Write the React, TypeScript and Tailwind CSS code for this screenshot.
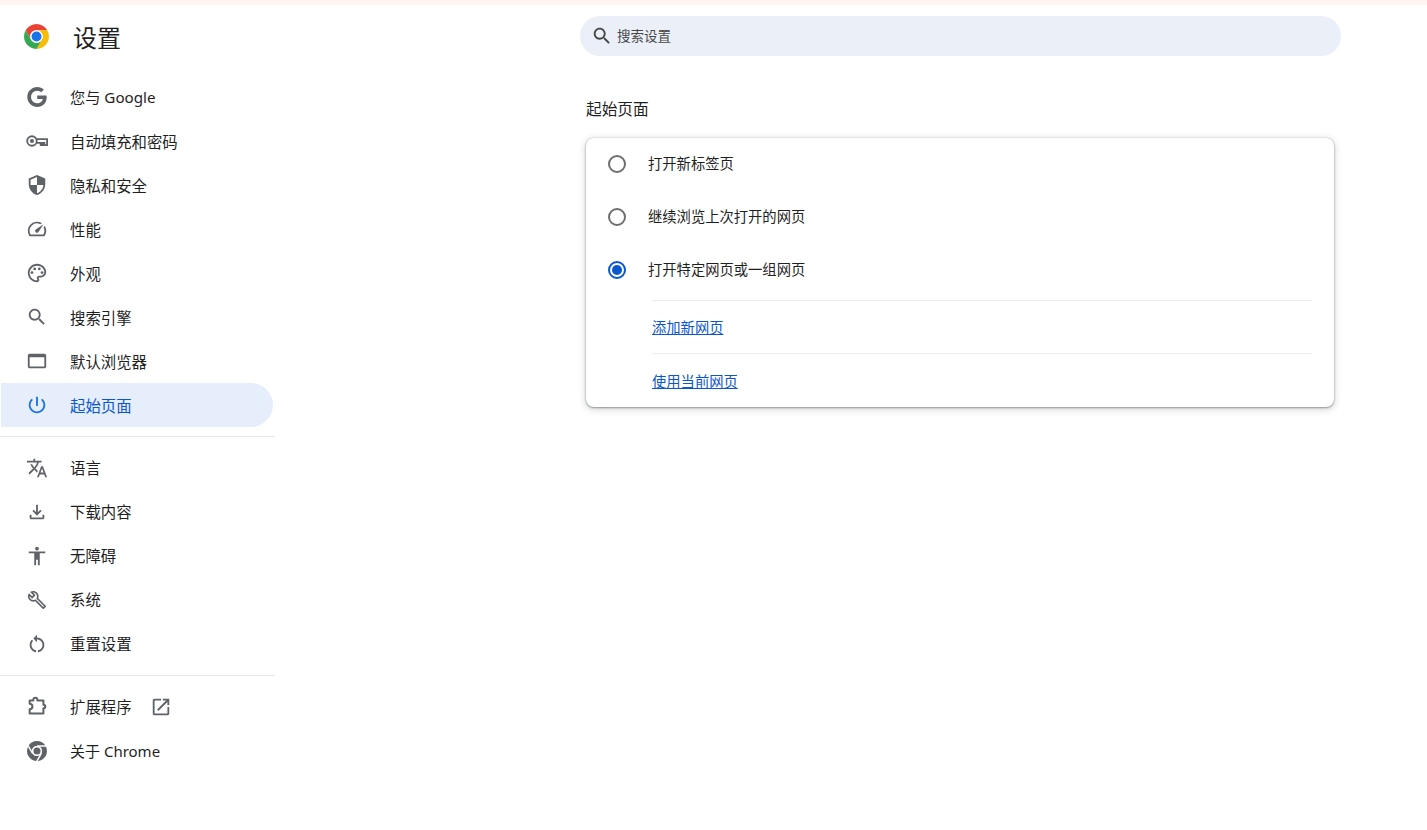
import type { ReactNode } from "react";

const FONT = "font-['Noto_Sans','Noto_Sans_CJK_SC',sans-serif]";

function Icon({ d, className = "", children }: { d?: string; className?: string; children?: ReactNode }) {
  return (
    <svg viewBox="0 0 24 24" fill="currentColor" className={`h-[22px] w-[22px] shrink-0 ${className}`}>
      {d && <path d={d} />}
      {children}
    </svg>
  );
}

const searchPath =
  "M15.5 14h-.79l-.28-.27C15.41 12.59 16 11.11 16 9.5 16 5.91 13.09 3 9.5 3S3 5.91 3 9.5 5.91 16 9.5 16c1.61 0 3.09-.59 4.23-1.57l.27.28v.79l5 4.99L20.49 19l-4.99-5zm-6 0C7.01 14 5 11.99 5 9.5S7.01 5 9.5 5 14 7.01 14 9.5 11.99 14 9.5 14z";

const googleIcon = (
  <Icon className="scale-90">
    <path d="M12.24 10.285V14.4h6.806c-.275 1.765-2.056 5.174-6.806 5.174-4.095 0-7.439-3.389-7.439-7.574s3.345-7.574 7.439-7.574c2.33 0 3.891.989 4.785 1.849l3.254-3.138C18.189 1.186 15.479 0 12.24 0c-6.635 0-12 5.365-12 12s5.365 12 12 12c6.926 0 11.52-4.869 11.52-11.726 0-.788-.085-1.39-.189-1.989H12.24z" />
  </Icon>
);

const keyIcon = (
  <Icon>
    <circle cx="6.5" cy="12" r="5.2" fill="none" stroke="currentColor" strokeWidth="2" />
    <circle cx="6.5" cy="12" r="2.2" />
    <path d="M11.5 10H23V16.5H20V14H18V16.5H16V14H11.5" fill="none" stroke="currentColor" strokeWidth="2" />
  </Icon>
);

const extensionIcon = (
  <Icon>
    <path
      d="M4 5H8V4a2.2 2.2 0 0 1 4.4 0V5H19V9.5a2 2 0 0 1 0 4V19H4V14.5a3 3 0 0 0 0-6Z"
      fill="none"
      stroke="currentColor"
      strokeWidth="2.2"
      strokeLinejoin="round"
    />
  </Icon>
);

const paletteIcon = (
  <Icon d="M12 22C6.49 22 2 17.51 2 12S6.49 2 12 2s10 4.04 10 9c0 3.31-2.69 6-6 6h-1.77c-.28 0-.5.22-.5.5 0 .12.05.23.13.33.41.47.64 1.06.64 1.67 0 1.38-1.12 2.5-2.5 2.5zm0-18c-4.41 0-8 3.59-8 8s3.59 8 8 8c.28 0 .5-.22.5-.5a.54.54 0 0 0-.14-.35c-.41-.46-.63-1.05-.63-1.65 0-1.38 1.12-2.5 2.5-2.5H16c2.21 0 4-1.79 4-4 0-3.86-3.59-7-8-7z">
    <circle cx="6.5" cy="11.5" r="1.5" />
    <circle cx="9.5" cy="7.5" r="1.5" />
    <circle cx="14.5" cy="7.5" r="1.5" />
    <circle cx="17.5" cy="11.5" r="1.5" />
  </Icon>
);

function ChromeLogo({ mono }: { mono?: boolean }) {
  return (
    <svg viewBox="0 0 48 48" className={mono ? "h-[20px] w-[20px] shrink-0" : "h-[25px] w-[25px] shrink-0"}>
      <path fill={mono ? "#5f6368" : "#ea4335"} d="M3.22 12A24 24 0 0 1 44.78 12L24 12A12 12 0 0 0 13.6 30Z" />
      <path fill={mono ? "#5f6368" : "#fbbc04"} d="M44.78 12A24 24 0 0 1 24 48L34.39 30A12 12 0 0 0 24 12Z" />
      <path fill={mono ? "#5f6368" : "#34a853"} d="M24 48A24 24 0 0 1 3.22 12L13.6 30A12 12 0 0 0 34.39 30Z" />
      <circle cx="24" cy="24" r="12" fill="#fff" />
      {mono && <path d="M24 12H46M34.39 30L23 49.7M13.6 30L2.2 10.3" stroke="#fff" strokeWidth="3.5" fill="none" />}
      <circle cx="24" cy="24" r={mono ? 8.5 : 9.5} fill={mono ? "#5f6368" : "#1a73e8"} />
    </svg>
  );
}

type Item = { label: string; icon: ReactNode; active?: boolean; size?: string; textClass?: string };

const topItems: Item[] = [
  { label: "您与 Google", icon: googleIcon, size: "text-[15.2px]", textClass: "pt-[2px]" },
  { label: "自动填充和密码", icon: keyIcon },
  {
    label: "隐私和安全",
    icon: <Icon d="M12 1L3 5v6c0 5.55 3.84 10.74 9 12 5.16-1.26 9-6.45 9-12V5l-9-4zm0 10.99h7c-.53 4.12-3.28 7.79-7 8.94V12H5V6.3l7-3.11v8.8z" />,
  },
  {
    label: "性能",
    icon: (
      <Icon d="M20.38 8.57l-1.23 1.85a8 8 0 0 1-.22 7.58H5.07A8 8 0 0 1 15.58 6.85l1.85-1.23A10 10 0 0 0 3.35 19a2 2 0 0 0 1.72 1h13.85a2 2 0 0 0 1.74-1 10 10 0 0 0-.27-10.44zm-9.79 6.84a2 2 0 0 0 2.83 0l5.66-8.49-8.49 5.66a2 2 0 0 0 0 2.83z" />
    ),
  },
  { label: "外观", icon: paletteIcon },
  { label: "搜索引擎", icon: <Icon d={searchPath} /> },
  {
    label: "默认浏览器",
    icon: <Icon d="M20 4H4c-1.11 0-2 .9-2 2v12c0 1.1.89 2 2 2h16c1.1 0 2-.9 2-2V6c0-1.1-.89-2-2-2zm0 14H4V8h16v10z" />,
  },
  {
    label: "起始页面",
    active: true,
    icon: (
      <Icon d="M13 3h-2v10h2V3zm4.83 2.17l-1.42 1.42C17.99 7.86 19 9.81 19 12c0 3.87-3.13 7-7 7s-7-3.13-7-7c0-2.19 1.01-4.14 2.58-5.42L6.17 5.17C4.23 6.82 3 9.26 3 12c0 4.97 4.03 9 9 9s9-4.03 9-9c0-2.74-1.23-5.18-3.17-6.83z" />
    ),
  },
];

const midItems: Item[] = [
  {
    label: "语言",
    icon: (
      <Icon d="M12.87 15.07l-2.54-2.51.03-.03c1.74-1.94 2.98-4.17 3.71-6.53H17V4h-7V2H8v2H1v1.99h11.17C11.5 7.92 10.44 9.75 9 11.35 8.07 10.32 7.3 9.19 6.69 8h-2c.73 1.63 1.73 3.17 2.98 4.56l-5.09 5.02L4 19l5-5 3.11 3.11.76-2.04zM18.5 10h-2L12 22h2l1.12-3h4.75L21 22h2l-4.5-12zm-2.62 7l1.62-4.33L19.12 17h-3.24z" />
    ),
  },
  {
    label: "下载内容",
    icon: <Icon d="M18 15v3H6v-3H4v3c0 1.1.9 2 2 2h12c1.1 0 2-.9 2-2v-3h-2zm-1-4l-1.41-1.41L13 12.17V4h-2v8.17L8.41 9.59 7 11l5 5 5-5z" />,
  },
  {
    label: "无障碍",
    icon: <Icon d="M12 2c1.1 0 2 .9 2 2s-.9 2-2 2-2-.9-2-2 .9-2 2-2zm9 7h-6v13h-2v-6h-2v6H9V9H3V7h18v2z" />,
  },
  {
    label: "系统",
    icon: (
      <Icon
        className="scale-90"
        d="M22.61 18.99l-9.08-9.08c.93-2.34.45-5.1-1.44-7C9.79.61 6.21.4 3.66 2.25L7.5 6.1 6.08 7.5 2.25 3.69C.39 6.23.6 9.82 2.9 12.11c1.86 1.86 4.57 2.35 6.89 1.48l9.11 9.11c.39.39 1.02.39 1.41 0l2.3-2.3c.4-.38.4-1.01 0-1.41zm-3 1.6l-9.46-9.46c-.61.45-1.29.72-2 .82-1.36.2-2.79-.21-3.83-1.25C3.37 9.76 2.93 8.5 3 7.26l3.09 3.09 4.24-4.24-3.09-3.09c1.24-.07 2.49.37 3.44 1.31 1.08 1.08 1.49 2.57 1.24 3.96-.12.71-.42 1.37-.88 1.96l9.45 9.45-.88.89z"
      />
    ),
  },
  {
    label: "重置设置",
    icon: (
      <Icon d="M12 5V2L8 6l4 4V7c3.31 0 6 2.69 6 6 0 2.97-2.17 5.43-5 5.91v2.02c3.95-.49 7-3.85 7-7.93 0-4.42-3.58-8-8-8zm-6 8c0-1.65.67-3.15 1.76-4.24L6.34 7.34C4.9 8.79 4 10.79 4 13c0 4.08 3.05 7.44 7 7.93v-2.02c-2.83-.48-5-2.94-5-5.91z" />
    ),
  },
];

function NavRow({
  label,
  icon,
  active,
  size = "text-[15.4px]",
  after,
  textClass,
}: Item & { after?: ReactNode }) {
  return (
    <div
      className={`ml-px flex h-11 w-[272px] items-center gap-[22px] rounded-r-[22px] pl-[25px] ${size} ${
        active ? "bg-[#e6edfb] text-[#0b57d0]" : "text-[#1f1f1f]"
      }`}
    >
      <span className={`flex w-[22px] justify-center ${active ? "text-[#1a73e8]" : "text-[#5f6368]"}`}>{icon}</span>
      <span className={`leading-none ${textClass}`}>{label}</span>
      {after}
    </div>
  );
}

function Radio({ checked }: { checked?: boolean }) {
  return (
    <span
      className={`flex h-[18px] w-[18px] items-center justify-center rounded-full border-2 ${
        checked ? "border-[#0b57d0]" : "border-[#6f6f6f]"
      }`}
    >
      {checked && <span className="h-[10px] w-[10px] rounded-full bg-[#0b57d0]" />}
    </span>
  );
}

function RadioRow({ label, checked }: { label: string; checked?: boolean }) {
  return (
    <div className="flex h-[53px] items-center gap-[22px] pb-px pl-[22px] text-[14.3px] text-[#1f1f1f]">
      <Radio checked={checked} />
      <span className="pb-px">{label}</span>
    </div>
  );
}

export default function App() {
  return (
    <div className={`min-h-[830px] bg-white ${FONT}`}>
      <div className="h-[5px] bg-[#fff6f1]" />
      <div className="flex">
        <aside className="w-[275px] shrink-0">
          <div className="flex h-[70px] items-center pb-[8px] pl-[24px]">
            <ChromeLogo />
            <span className="ml-[24px] pt-[4px] text-[24px] leading-none text-[#1f1f1f]">设置</span>
          </div>
          {topItems.map((item) => (
            <NavRow key={item.label} textClass="pt-[4px]" {...item} />
          ))}
          <div className="my-[9px] h-px bg-[#e8e8e8]" />
          {midItems.map((item) => (
            <NavRow key={item.label} textClass="pt-[2px]" {...item} />
          ))}
          <div className="my-[9px] h-px bg-[#e8e8e8]" />
          <NavRow
            label="扩展程序"
            textClass="pt-[2px]"
            icon={extensionIcon}
            after={
              <span className="-ml-[4px] text-[#5f6368]">
                <Icon d="M19 19H5V5h7V3H5c-1.11 0-2 .9-2 2v14c0 1.1.89 2 2 2h14c1.1 0 2-.9 2-2v-7h-2v7zM14 3v2h3.59l-9.83 9.83 1.41 1.41L19 6.41V10h2V3h-7z" />
              </span>
            }
          />
          <NavRow label="关于 Chrome" size="text-[15px]" textClass="pt-[1px]" icon={<ChromeLogo mono />} />
        </aside>

        <main className="pl-[305px]">
          <div className="mt-[11px] flex h-10 w-[761px] items-center rounded-[20px] bg-[#ebeff8] pl-[11px] text-[13.5px] text-[#474747]">
            <Icon d={searchPath} className="text-[#444746]" />
            <span className="ml-[4px]">搜索设置</span>
          </div>

          <div className="ml-[6px] w-[748px]">
            <h2 className="mt-[41px] h-[24px] text-[15.7px] font-normal leading-[24px] text-[#1f1f1f]">起始页面</h2>
            <div className="mt-[17px] rounded-[8px] bg-white shadow-[0_0_2px_rgba(60,64,67,0.2),0_1px_2px_rgba(60,64,67,0.45),0_2px_6px_2px_rgba(60,64,67,0.15)]">
              <RadioRow label="打开新标签页" />
              <RadioRow label="继续浏览上次打开的网页" />
              <RadioRow label="打开特定网页或一组网页" checked />
              <div className="ml-[66px] mr-[22px] mt-[3px] flex flex-col text-[14.3px] text-[#0b57d0]">
                <div className="flex h-[53px] items-center border-t border-[#ececec]">
                  <span className="pt-[2px] underline">添加新网页</span>
                </div>
                <div className="flex h-[54px] items-center border-t border-[#ececec]">
                  <span className="pt-[2px] underline">使用当前网页</span>
                </div>
              </div>
            </div>
          </div>
        </main>
      </div>
    </div>
  );
}
